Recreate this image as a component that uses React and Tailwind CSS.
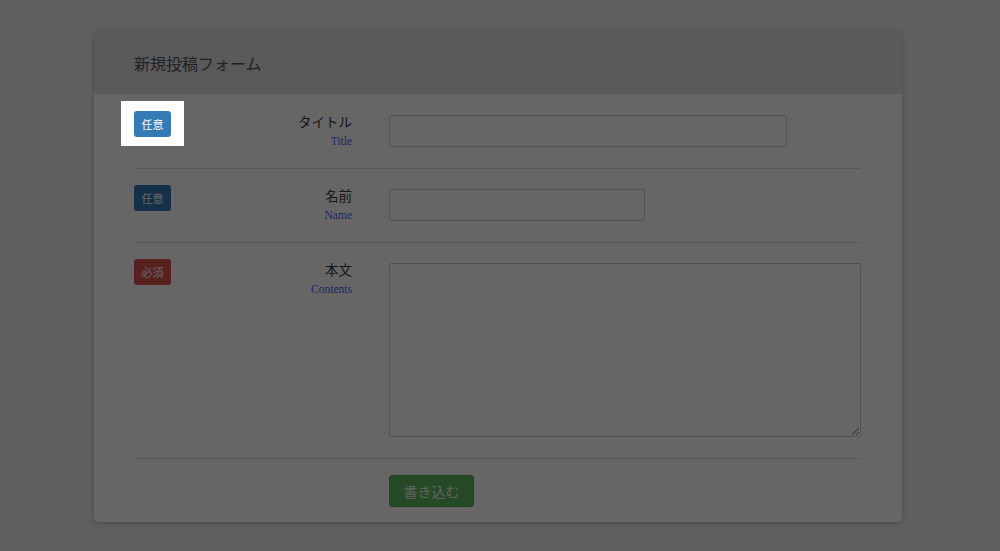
import React from 'react';

const jp = { fontFamily: '"Noto Sans CJK JP", "Noto Sans", sans-serif' };

const Badge = ({ type }) => {
  const cls =
    type === 'required'
      ? 'bg-[#d9534f]'
      : 'bg-[#337ab7]';
  return (
    <span className={`inline-flex items-center justify-center w-[37px] h-[26px] rounded-[3px] text-white text-[11px] ${cls}`}>
      {type === 'required' ? '必須' : '任意'}
    </span>
  );
};

const Row = ({ badge, label, sub, highlight, children, first }) => (
  <div className={`flex border-b border-[#dcdcdc] pb-[21px] ${first ? 'pt-[16px]' : 'pt-[15px]'}`}>
    <div className="w-[37px] shrink-0">
      {highlight ? (
        <div className="relative z-50 -mx-[13px] -my-[9px] bg-white px-[13px] py-[9px] w-[63px]">
          <Badge type={badge} />
        </div>
      ) : (
        <Badge type={badge} />
      )}
    </div>
    <div className="flex-1 text-right">
      <div className="text-[13.5px] leading-[22px] text-[#3a3a3a]">{label}</div>
      <div className="mt-[3px] text-[11.5px] leading-[12px] text-[#4a5cff]" style={{ fontFamily: '"Liberation Serif", serif' }}>
        {sub}
      </div>
    </div>
    <div className="ml-[37px] w-[472px] shrink-0 pt-[5px]">{children}</div>
  </div>
);

export default function App() {
  return (
    <div className="min-h-screen bg-[#eeeeee] pt-[31px] pb-[29px]" style={jp}>
      <div className="ml-[94px] w-[808px] bg-white rounded-[4px] shadow-[0_1px_4px_rgba(0,0,0,0.25)] overflow-hidden">
        <div className="h-[63px] bg-[#e2e2e2] px-[40px] flex items-center">
          <h1 className="text-[16px] text-[#555]">新規投稿フォーム</h1>
        </div>
        <div className="px-[40px] pr-[41px]">
          <Row badge="optional" label="タイトル" sub="Title" highlight first>
            <input className="block w-[398px] h-[32px] border border-[#cccccc] rounded-[3px]" />
          </Row>
          <Row badge="optional" label="名前" sub="Name">
            <input className="block w-[256px] h-[32px] border border-[#cccccc] rounded-[3px]" />
          </Row>
          <Row badge="required" label="本文" sub="Contents">
            <textarea className="block w-[472px] h-[174px] border border-[#cccccc] rounded-[2px]" />
          </Row>
          <div className="flex pt-[16px] pb-[15px]">
            <div className="ml-[255px]">
              <button className="w-[85px] h-[32px] rounded-[3px] bg-[#5cb85c] border border-[#4cae4c] text-[#f4f4f4] text-[14px]">
                書き込む
              </button>
            </div>
          </div>
        </div>
      </div>
      <div className="fixed inset-0 z-40 bg-black/60" />
    </div>
  );
}
